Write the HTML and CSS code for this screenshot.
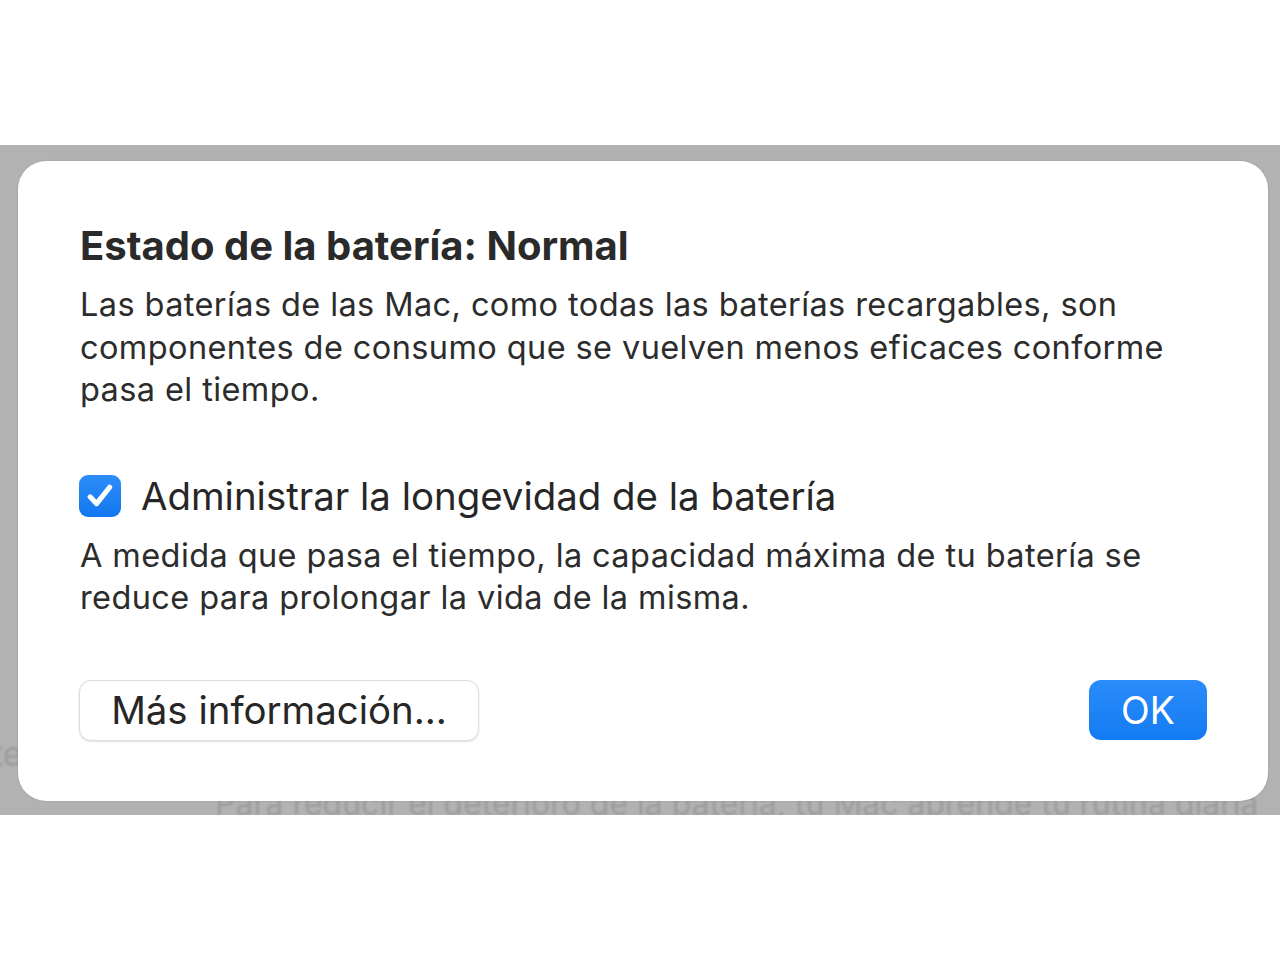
FILE: index.html
```html
<!DOCTYPE html>
<html lang="es">
<head>
<meta charset="utf-8">
<title>Estado de la batería</title>
<link rel="stylesheet" href="styles.css">
</head>
<body>
<div class="top-space"></div>
<div class="backdrop">
  <div class="bg-content">
    <div class="bg-left">te</div>
    <div class="bg-line">Para reducir el deterioro de la batería, tu Mac aprende tu rutina diaria</div>
  </div>
  <div class="dialog">
    <h1 class="title">Estado de la batería: Normal</h1>
    <p class="text">Las baterías de las Mac, como todas las baterías recargables, son componentes de consumo que se vuelven menos eficaces conforme pasa el tiempo.</p>
    <label class="check-row">
      <span class="checkbox">
        <svg viewBox="0 0 24 24" width="34" height="34"><path d="M5 12.6 L9.6 17.4 L18.8 5.8" fill="none" stroke="#fff" stroke-width="3.6" stroke-linecap="round" stroke-linejoin="round"/></svg>
      </span>
      <span class="check-label">Administrar la longevidad de la batería</span>
    </label>
    <p class="text desc">A medida que pasa el tiempo, la capacidad máxima de tu batería se reduce para prolongar la vida de la misma.</p>
    <div class="buttons">
      <button class="btn btn-secondary">Más información...</button>
      <button class="btn btn-primary">OK</button>
    </div>
  </div>
</div>
</body>
</html>
```
FILE: styles.css
```css
html, body {
  margin: 0;
  padding: 0;
  background: #ffffff;
}
body {
  font-family: Inter, "Noto Sans", "Liberation Sans", sans-serif;
  color: #262626;
}
.top-space {
  height: 145px;
}
.backdrop {
  position: relative;
  height: 670px;
  background: #b2b2b2;
  overflow: hidden;
}
.bg-content {
  display: flex;
  flex-direction: column;
  height: 100%;
  justify-content: flex-end;
  color: #9c9c9c;
  filter: blur(1px);
}
.bg-left {
  font-size: 34px;
  margin-left: -8px;
  margin-bottom: 10px;
}
.bg-line {
  font-size: 32px;
  margin-left: 215px;
  margin-bottom: -8px;
  white-space: nowrap;
}
.dialog {
  position: absolute;
  left: 18px;
  top: 16px;
  width: 1250px;
  height: 640px;
  box-sizing: border-box;
  background: #ffffff;
  border-radius: 28px;
  padding: 58px 60px 0 62px;
  box-shadow: 0 0 2px rgba(0,0,0,0.15);
}
.title {
  margin: 0;
  font-size: 40px;
  font-weight: 700;
  line-height: 54px;
  color: #2a2a2a;
}
.text {
  margin: 0;
  font-size: 32.5px;
  line-height: 42.5px;
  color: #2c2c2c;
  letter-spacing: 0.4px;
}
.title + .text {
  margin-top: 11px;
}
.check-row {
  display: flex;
  align-items: center;
  gap: 20px;
  margin-top: 58px;
  height: 52px;
}
.checkbox {
  width: 42px;
  height: 42px;
  border-radius: 9px;
  background: linear-gradient(#2d8cf9, #1277ef);
  display: flex;
  align-items: center;
  justify-content: center;
  flex: none;
  margin-left: -1px;
}
.check-label {
  font-size: 38.4px;
  color: #262626;
}
.desc {
  margin-top: 13px;
}
.buttons {
  display: flex;
  justify-content: space-between;
  align-items: center;
  margin-top: 60px;
}
.btn {
  font-family: inherit;
  border-radius: 12px;
  cursor: pointer;
  padding: 0;
}
.btn-secondary {
  width: 400px;
  height: 61px;
  background: #ffffff;
  border: 1px solid #dcdcdc;
  box-shadow: 0 1px 2px rgba(0,0,0,0.12);
  font-size: 38.4px;
  color: #262626;
  margin-left: -1px;
}
.btn-primary {
  width: 118px;
  height: 60px;
  background: linear-gradient(#2a8cf9, #137bf3);
  border: none;
  color: #ffffff;
  font-size: 37.5px;
  font-weight: 400;
  margin-right: 1px;
}
```
